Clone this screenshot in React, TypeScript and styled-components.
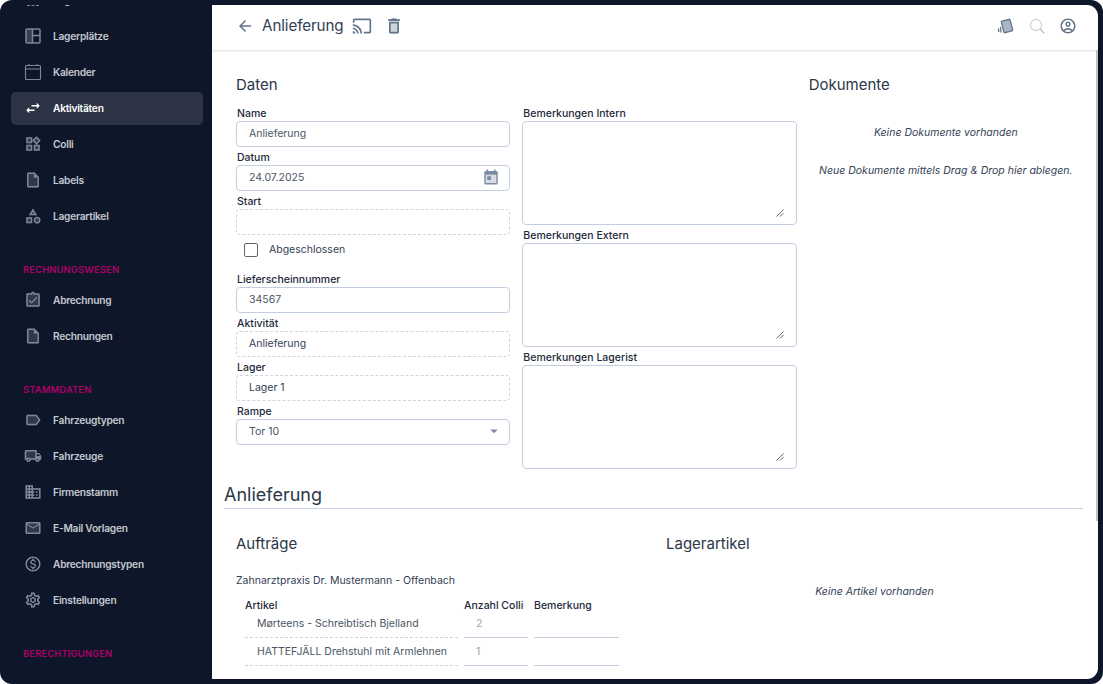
import React from "react";
import styled, { createGlobalStyle } from "styled-components";
import {
  MdApps, MdSwapHoriz, MdWidgets, MdOutlineWidgets,
  MdInsertDriveFile, MdOutlineInsertDriveFile, MdCategory, MdOutlineCategory, MdAssignmentTurnedIn,
  MdOutlineAssignmentTurnedIn, MdLabel, MdOutlineLabel, MdLocalShipping, MdOutlineLocalShipping, MdDomain,
  MdOutlineDomain, MdEmail, MdOutlineEmail, MdOutlineMonetizationOn, MdOutlineSettings, MdArrowBack, MdOutlineCast,
  MdDelete, MdOutlineDelete, MdOutlineAccountCircle, MdArrowDropDown,
} from "react-icons/md";
import type { IconType } from "react-icons";

const FONT = `Inter, "Noto Sans", "Liberation Sans", sans-serif`;

const Global = createGlobalStyle`
  html, body { margin: 0; padding: 0; background: #fff; }
  body { font-family: ${FONT}; }
  * { box-sizing: border-box; }
`;

const Frame = styled.div`
  width: 1103px; height: 684px; display: flex; overflow: hidden;
  background: #0e172a; border-radius: 12px;
`;
const Sidebar = styled.aside`
  width: 212px; flex: none; margin: 5px 0; overflow: hidden;
`;
const Nav = styled.nav`
  margin-top: -23px; display: flex; flex-direction: column;
`;
const NavItem = styled.div<{ $active?: boolean }>`
  height: 33px; margin: 1.5px 9px 1.5px 11px; padding-left: 12.5px;
  display: flex; align-items: center;
  border-radius: 5px;
  background: ${(p) => (p.$active ? "#2c3446" : "transparent")};
  color: ${(p) => (p.$active ? "#ffffff" : "#c4c7cf")};
  font-size: 10.2px; font-weight: 600; letter-spacing: -0.25px;
`;
const NavIcon = styled.span<{ $active?: boolean }>`
  position: relative; width: 18px; height: 18px; flex: none; margin-right: 11.5px;
  color: ${(p) => (p.$active ? "#ffffff" : "#80869a")};
  svg { width: 18px; height: 18px; display: block; }
`;
const Tone = styled.span`
  position: absolute; inset: 0; opacity: 0.3; display: block;
`;
const GroupLabel = styled.div`
  margin-top: 29px; height: 19px; padding-left: 23px;
  color: #ac0066; font-size: 9.4px; font-weight: 600; letter-spacing: 0.15px; line-height: 14px;
`;

const Main = styled.main`
  position: relative; flex: 1; margin: 5px 5px 5px 0; background: #fff; border-radius: 0 11px 11px 0;
  overflow: hidden; display: flex; flex-direction: column;
`;
const ScrollThumb = styled.div`
  position: absolute; right: 0; top: 45px; width: 2px; height: 471px; background: #c2c2c4;
`;
const Bar = styled.header`
  height: 46px; flex: none; display: flex; align-items: center; padding: 0 21px 4px 24px;
  border-bottom: 1px solid #e8e9ec; box-shadow: 0 1px 1px rgba(0,0,0,0.03);
`;
const BarTitle = styled.h1`
  margin: 0 8px 0 8px; font-size: 15.2px; font-weight: 400; color: #344054; letter-spacing: -0.1px;
`;
const BarIcon = styled.span<{ $gap?: number; $size?: number }>`
  position: relative; display: inline-flex; color: #64748b;
  margin-right: ${(p) => p.$gap ?? 0}px;
  svg { width: ${(p) => p.$size ?? 20}px; height: ${(p) => p.$size ?? 20}px; display: block; }
`;
const Spacer = styled.div` flex: 1; `;

const Content = styled.div`
  flex: 1; padding: 0 15px 0 12px; overflow: hidden;
`;
const TopGrid = styled.section`
  display: grid; grid-template-columns: repeat(3, 1fr); column-gap: 12px; padding: 25px 0 0 12px;
`;
const Column = styled.div` display: flex; flex-direction: column; `;
const SectionTitle = styled.h2`
  margin: 0 0 9px; height: 18px; font-size: 15px; line-height: 18px; font-weight: 400; color: #2b3648;
`;
const Field = styled.div` display: flex; flex-direction: column; `;
const Label = styled.label`
  display: block; height: 18px; padding: 4px 0 0 1px; font-size: 10.5px; line-height: 14px; font-weight: 500; color: #1e293b;
`;
const Box = styled.div<{ $dashed?: boolean; $dark?: boolean }>`
  position: relative; height: 26px; display: flex; align-items: center; justify-content: space-between; padding: 0 12px 2px;
  border: 1px ${(p) => (p.$dashed ? "dashed #cdd5e1" : "solid #c3cfe0")}; border-radius: 4px;
  font-size: 10.5px; color: ${(p) => (p.$dark ? "#334155" : "#4b5563")};
`;
const BoxIcon = styled.span<{ $shift: number }>`
  position: relative; display: block; width: 18px; height: 18px; color: #7c8ba1; margin-right: ${(p) => p.$shift}px;
  svg { width: 18px; height: 18px; display: block; }
`;
const CheckRow = styled.div`
  height: 34px; padding: 5px 0 0 8px; display: flex; align-items: flex-start; gap: 11px;
  font-size: 10.5px; color: #334155; line-height: 20px;
`;
const Check = styled.span`
  width: 14px; height: 14px; margin-top: 3px; border: 1px solid #5f6672; border-radius: 2px; flex: none;
`;
const NoteBox = styled.div`
  position: relative; height: 104px; border: 1px solid #c3cfe0; border-radius: 4px;
`;
const Handle = styled.svg`
  position: absolute; right: 12px; bottom: 7px; width: 8px; height: 8px;
`;
const Empty = styled.p`
  margin: 0; text-align: center; font-style: italic; font-size: 10.5px; line-height: 14px; color: #334155;
`;
const DocList = styled.div`
  display: flex; flex-direction: column; gap: 24px; padding-top: 23px;
`;
const Heading = styled.h2`
  margin: 18px 0 0; height: 22px; border-bottom: 1px solid #c5d2e3;
  font-size: 18px; line-height: 16px; font-weight: 400; color: #2b3648;
`;
const Lower = styled.section`
  display: grid; grid-template-columns: 430px 1fr; padding: 26px 0 0 12px;
`;
const Customer = styled.div`
  margin-top: 12px; font-size: 10.5px; line-height: 14px; color: #334155;
`;
const Table = styled.div`
  display: grid; grid-template-columns: 213px 64px 85px; column-gap: 6px; padding: 11px 0 0 9px; width: 400px;
`;
const Th = styled.div`
  height: 11px; font-size: 10.5px; line-height: 14px; font-weight: 500; color: #1e293b; white-space: nowrap;
`;
const Cell = styled.div<{ $dashed?: boolean; $muted?: boolean }>`
  height: 28px; padding: 0 12px; font-size: 10.5px; line-height: 27px; white-space: nowrap; overflow: hidden;
  border-bottom: 1px ${(p) => (p.$dashed ? "dashed #cdd5e1" : "solid #c3cfe0")};
  color: ${(p) => (p.$muted ? "#9aa5b5" : "#4b5563")};
`;

const Phone = () => (
  <svg viewBox="0 0 18 18" fill="none">
    <rect x="6.5" y="3" width="9" height="12" rx="1" transform="rotate(-15 11 9)" fill="#aab6c6" stroke="#64748b" strokeWidth="1.3" />
    <path d="M4.5 10.5 L5 15 M2.5 12 L2.8 14.5" stroke="#64748b" strokeWidth="1.3" strokeLinecap="round" />
  </svg>
);
const SearchThin = () => (
  <svg viewBox="0 0 16 16" fill="none" stroke="#c7d0dc" strokeWidth="1.1" strokeLinecap="round">
    <circle cx="7" cy="7" r="5.6" />
    <path d="M11.2 11.2 L15 15" stroke="#aab4c2" />
  </svg>
);
const QuiltIcon = () => (
  <svg viewBox="0 0 18 18" fill="none" stroke="currentColor" strokeWidth="1.5">
    <rect x="2" y="2" width="14" height="14" rx="1.2" />
    <rect x="2" y="2" width="6.5" height="14" fill="currentColor" fillOpacity="0.35" stroke="none" />
    <path d="M8.5 2 V16 M8.5 8.5 H16" />
  </svg>
);
const CalendarThin = () => (
  <svg viewBox="0 0 18 18" fill="none" stroke="currentColor" strokeWidth="1.1">
    <rect x="1.5" y="2.5" width="15" height="14" rx="1" />
    <path d="M1.5 6 H16.5 M5 0.8 V3 M13 0.8 V3" />
  </svg>
);
const DateIcon = () => (
  <svg viewBox="0 0 24 24" fill="currentColor">
    <path d="M5 9h14v11H5z" opacity="0.3" />
    <path d="M19 4h-1V2h-2v2H8V2H6v2H5a2 2 0 0 0-2 2v14a2 2 0 0 0 2 2h14a2 2 0 0 0 2-2V6a2 2 0 0 0-2-2zm0 16H5V9h14v11z" />
    <path d="M7 11h5v5H7z" />
  </svg>
);

const Duo = ({ fill: Fill, line: Line }: { fill: IconType; line: IconType }) => (
  <>
    <Tone><Fill /></Tone>
    <Line />
  </>
);

const FieldRow = ({ label, value, dashed, dark, icon, shift = -3 }: { label: string; value?: string; dashed?: boolean; dark?: boolean; icon?: React.ReactNode; shift?: number }) => (
  <Field>
    <Label>{label}</Label>
    <Box $dashed={dashed} $dark={dark}><span>{value}</span>{icon && <BoxIcon $shift={shift}>{icon}</BoxIcon>}</Box>
  </Field>
);

const Note = ({ label }: { label: string }) => (
  <Field>
    <Label>{label}</Label>
    <NoteBox>
      <Handle viewBox="0 0 8 8"><path d="M0.5 7.5 L7.5 0.5 M4 7.5 L7.5 4" stroke="#555" strokeWidth="0.9" /></Handle>
    </NoteBox>
  </Field>
);

const Item = ({ icon, label, active }: { icon: React.ReactNode; label: string; active?: boolean }) => (
  <NavItem $active={active}><NavIcon $active={active}>{icon}</NavIcon>{label}</NavItem>
);

export default function App() {
  return (
    <>
      <Global />
      <Frame>
        <Sidebar>
          <Nav>
            <Item icon={<MdApps />} label="Lager" />
            <Item icon={<QuiltIcon />} label="Lagerplätze" />
            <Item icon={<CalendarThin />} label="Kalender" />
            <Item active icon={<MdSwapHoriz />} label="Aktivitäten" />
            <Item icon={<Duo fill={MdWidgets} line={MdOutlineWidgets} />} label="Colli" />
            <Item icon={<Duo fill={MdInsertDriveFile} line={MdOutlineInsertDriveFile} />} label="Labels" />
            <Item icon={<Duo fill={MdCategory} line={MdOutlineCategory} />} label="Lagerartikel" />
            <GroupLabel>RECHNUNGSWESEN</GroupLabel>
            <Item icon={<Duo fill={MdAssignmentTurnedIn} line={MdOutlineAssignmentTurnedIn} />} label="Abrechnung" />
            <Item icon={<Duo fill={MdInsertDriveFile} line={MdOutlineInsertDriveFile} />} label="Rechnungen" />
            <GroupLabel>STAMMDATEN</GroupLabel>
            <Item icon={<Duo fill={MdLabel} line={MdOutlineLabel} />} label="Fahrzeugtypen" />
            <Item icon={<Duo fill={MdLocalShipping} line={MdOutlineLocalShipping} />} label="Fahrzeuge" />
            <Item icon={<Duo fill={MdDomain} line={MdOutlineDomain} />} label="Firmenstamm" />
            <Item icon={<Duo fill={MdEmail} line={MdOutlineEmail} />} label="E-Mail Vorlagen" />
            <Item icon={<MdOutlineMonetizationOn />} label="Abrechnungstypen" />
            <Item icon={<MdOutlineSettings />} label="Einstellungen" />
            <GroupLabel>BERECHTIGUNGEN</GroupLabel>
          </Nav>
        </Sidebar>
        <Main>
          <Bar>
            <BarIcon $size={18}><MdArrowBack /></BarIcon>
            <BarTitle>Anlieferung</BarTitle>
            <BarIcon $gap={12}><MdOutlineCast /></BarIcon>
            <BarIcon $size={20}><Duo fill={MdDelete} line={MdOutlineDelete} /></BarIcon>
            <Spacer />
            <BarIcon $gap={15} $size={18}><Phone /></BarIcon>
            <BarIcon $gap={14} $size={16}><SearchThin /></BarIcon>
            <BarIcon $size={18}><MdOutlineAccountCircle /></BarIcon>
          </Bar>
          <Content>
            <TopGrid>
              <Column>
                <SectionTitle>Daten</SectionTitle>
                <FieldRow label="Name" value="Anlieferung" />
                <FieldRow label="Datum" value="24.07.2025" icon={<DateIcon />} />
                <FieldRow label="Start" dashed />
                <CheckRow><Check />Abgeschlossen</CheckRow>
                <FieldRow label="Lieferscheinnummer" value="34567" />
                <FieldRow label="Aktivität" value="Anlieferung" dashed dark />
                <FieldRow label="Lager" value="Lager 1" dashed dark />
                <FieldRow label="Rampe" value="Tor 10" icon={<MdArrowDropDown />} shift={-6} />
              </Column>
              <Column>
                <SectionTitle />
                <Note label="Bemerkungen Intern" />
                <Note label="Bemerkungen Extern" />
                <Note label="Bemerkungen Lagerist" />
              </Column>
              <Column>
                <SectionTitle>Dokumente</SectionTitle>
                <DocList>
                  <Empty>Keine Dokumente vorhanden</Empty>
                  <Empty>Neue Dokumente mittels Drag &amp; Drop hier ablegen.</Empty>
                </DocList>
              </Column>
            </TopGrid>
            <Heading>Anlieferung</Heading>
            <Lower>
              <Column>
                <SectionTitle>Aufträge</SectionTitle>
                <Customer>Zahnarztpraxis Dr. Mustermann - Offenbach</Customer>
                <Table>
                  <Th>Artikel</Th><Th>Anzahl Colli</Th><Th>Bemerkung</Th>
                  <Cell $dashed>Mørteens - Schreibtisch Bjelland</Cell><Cell $muted>2</Cell><Cell />
                  <Cell $dashed>HATTEFJÄLL Drehstuhl mit Armlehnen</Cell><Cell $muted>1</Cell><Cell />
                </Table>
              </Column>
              <Column>
                <SectionTitle>Lagerartikel</SectionTitle>
                <DocList>
                  <Empty>Keine Artikel vorhanden</Empty>
                </DocList>
              </Column>
            </Lower>
          </Content>
          <ScrollThumb />
        </Main>
      </Frame>
    </>
  );
}
